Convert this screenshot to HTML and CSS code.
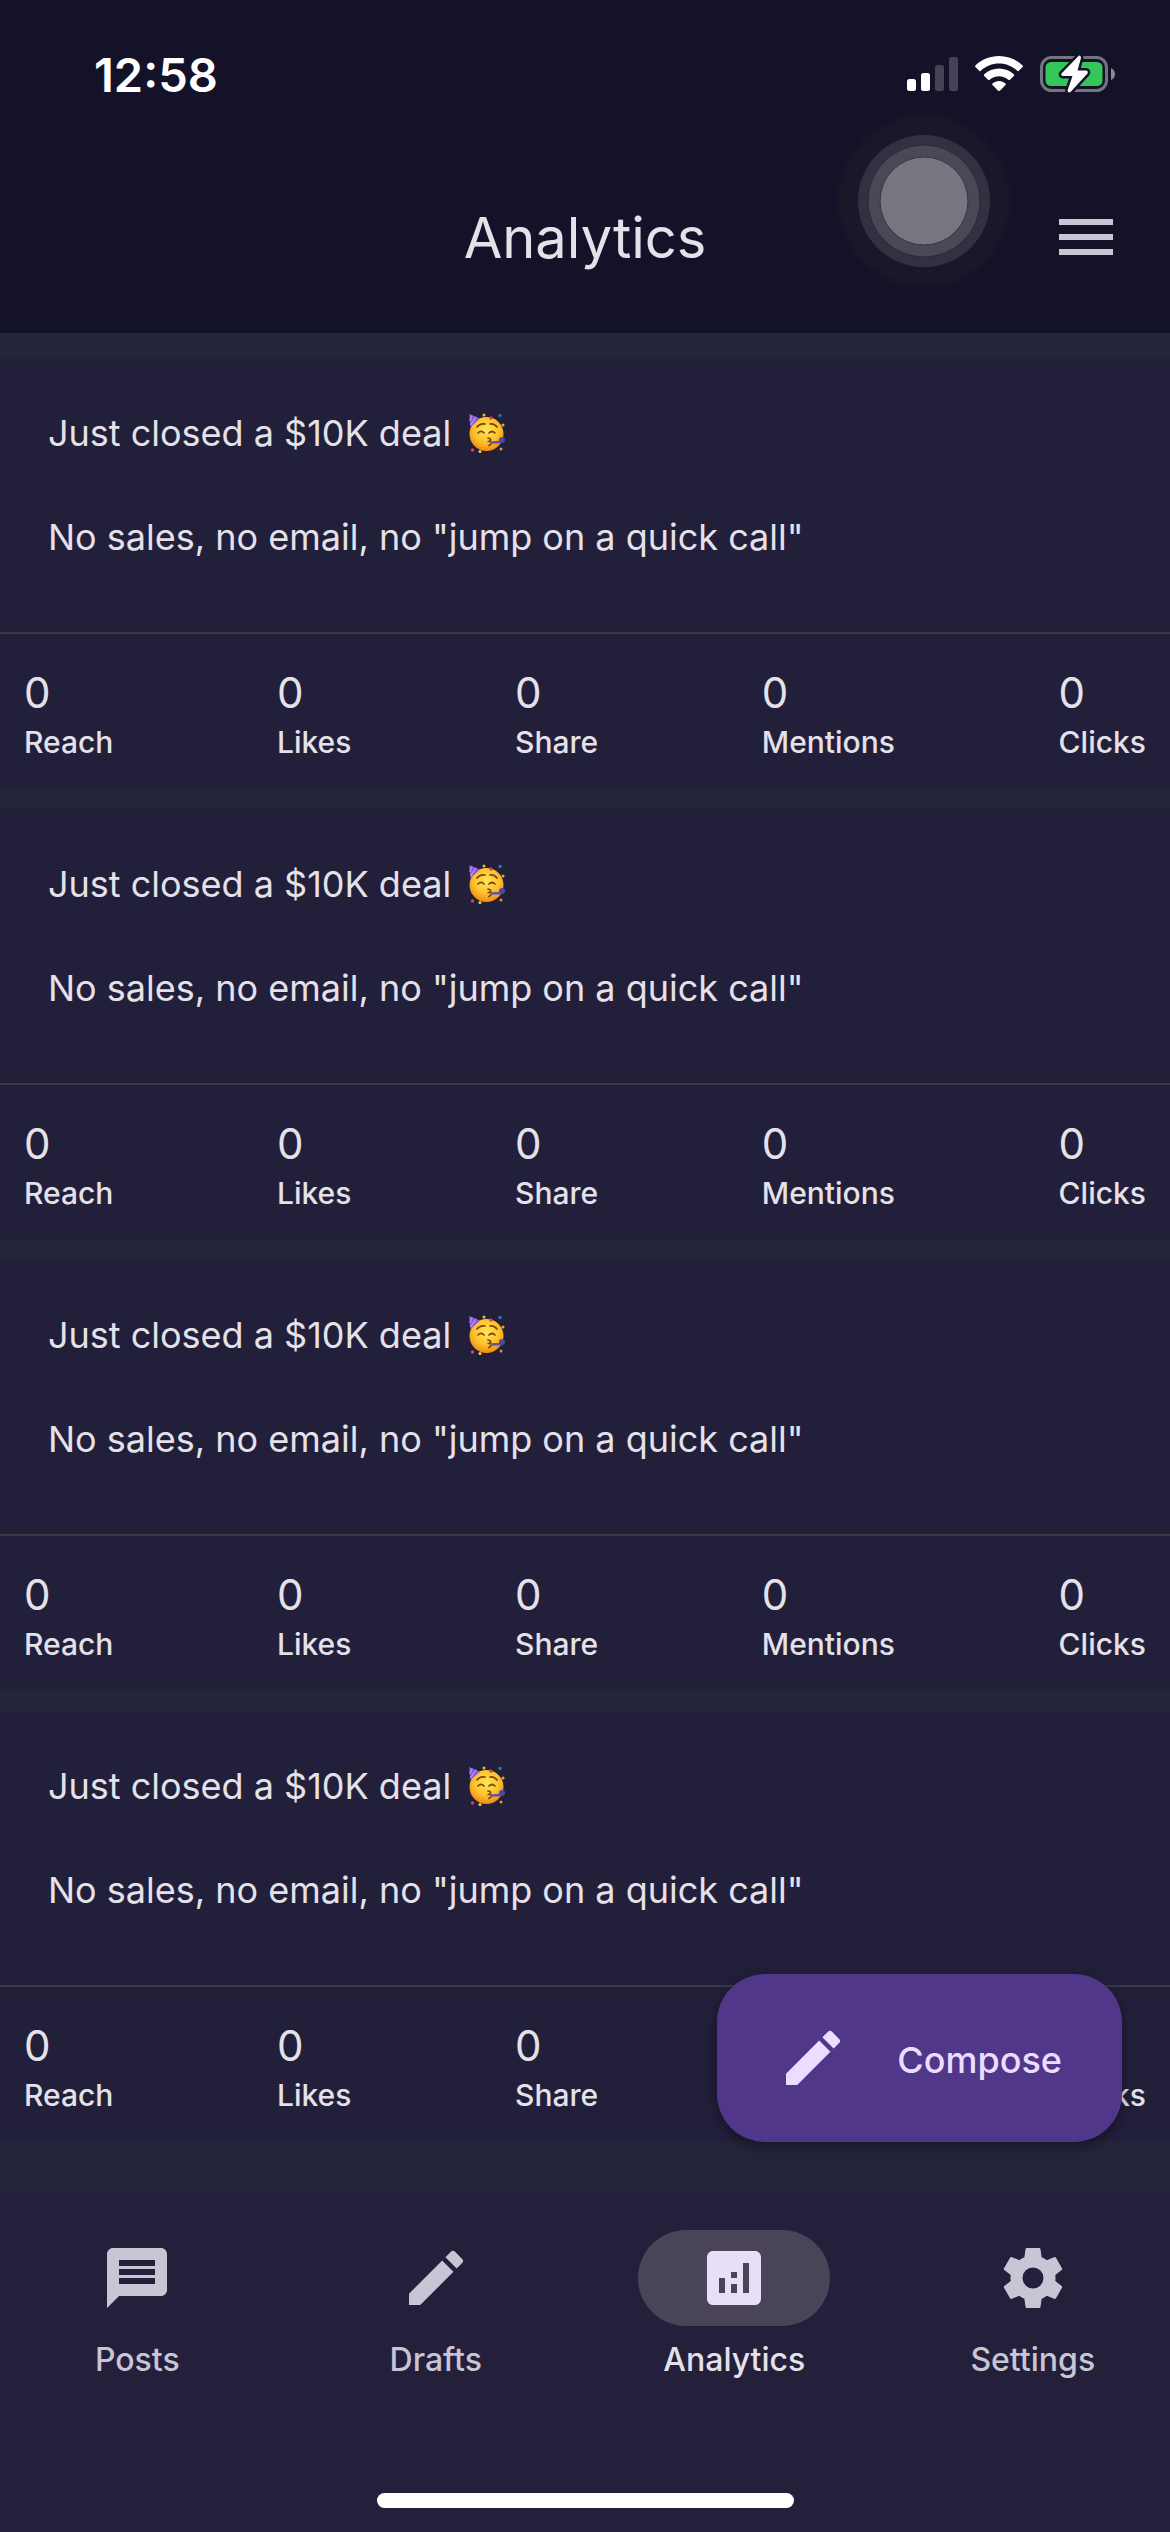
FILE: index.html
```html
<!DOCTYPE html>
<html lang="en">
<head>
<meta charset="utf-8">
<meta name="viewport" content="width=device-width, initial-scale=1">
<title>Analytics</title>
<link rel="stylesheet" href="styles.css">
</head>
<body>
<svg class="defs" aria-hidden="true">
  <defs>
    <radialGradient id="skin" cx="50%" cy="38%" r="62%">
      <stop offset="0" stop-color="#ffe55a"/><stop offset="0.6" stop-color="#fcc22c"/><stop offset="1" stop-color="#ee8a18"/>
    </radialGradient>
    <radialGradient id="halo">
      <stop offset="0.9" stop-color="#1a1728"/><stop offset="1" stop-color="#1a1728" stop-opacity="0"/>
    </radialGradient>
    <symbol id="party" viewBox="0 0 36 40">
      <circle cx="17.500" cy="21" r="17" fill="url(#skin)"/>
      <path d="M0 1 11 5.500 1.500 14Z" fill="#8658d8"/>
      <path d="M3 2.300 1 8M7 3.900 1.400 12" stroke="#b68cf0" stroke-width="1.500"/>
      <g fill="none" stroke="#7a4310" stroke-width="1.700" stroke-linecap="round">
        <path d="M8 14q3-4 8-3M21 11q4-1 7 3M9 20q3-3 6 0M20 20q3-3 6 0"/>
        <path d="M19 25q5 1 1 3.500q5 1 0 4"/>
      </g>
      <path d="M22 29.500 33 29" stroke="#5c55b8" stroke-width="2.500"/>
      <circle cx="33" cy="27" r="3" fill="#4d4a9e"/>
      <circle cx="15" cy="2" r="1.500" fill="#f2b632"/><circle cx="22" cy="5" r="1.700" fill="#e2383d"/>
      <circle cx="31" cy="2.500" r="1.800" fill="#2e6db8"/><circle cx="34" cy="12" r="1.500" fill="#f0a52c"/>
      <circle cx="3.500" cy="37" r="1.700" fill="#e2415c"/><circle cx="11" cy="38.500" r="1.500" fill="#f6d030"/>
      <circle cx="32" cy="36" r="1.500" fill="#f08a3c"/>
    </symbol>
    <symbol id="pencil" viewBox="0 0 24 24">
      <path d="M3 17.250V21h3.750L17.810 9.940l-3.750-3.750L3 17.250zM20.710 7.040a1 1 0 0 0 0-1.410l-2.340-2.340a1 1 0 0 0-1.410 0l-1.830 1.830 3.750 3.750 1.830-1.830z"/>
    </symbol>
  </defs>
</svg>

<header class="top">
  <div class="status">
    <time class="clock">12:58</time>
    <div class="indicators">
      <svg class="signal" viewBox="0 0 51 36" aria-label="Signal">
        <rect x="0" y="23" width="9" height="12" rx="2.500" fill="#fff"/><rect x="14" y="17" width="9" height="18" rx="2.500" fill="#fff"/>
        <rect x="28" y="9" width="9" height="26" rx="2.500" fill="#434257"/><rect x="42" y="1" width="9" height="34" rx="2.500" fill="#434257"/>
      </svg>
      <svg class="wifi" viewBox="0 0 48 36" aria-label="Wi-Fi" fill="#fff">
        <path d="M24 0C33 0 41.500 3.500 47.600 9.400q.7.800 0 1.600L43.800 14.800q-.8.700-1.600 0C37.300 10.200 31 7.600 24 7.600S10.700 10.200 5.800 14.800q-.8.700-1.600 0L.4 11q-.7-.8 0-1.600C6.500 3.500 15 0 24 0Z"/>
        <path d="M24 12.600c5.600 0 10.800 2.100 14.800 5.700q.9.800 0 1.700L35 23.700q-.8.700-1.700 0C30.800 21.500 27.500 20.200 24 20.200s-6.800 1.300-9.300 3.500q-.9.700-1.700 0L9.200 20q-.9-.9 0-1.700C13.200 14.700 18.400 12.600 24 12.600Z"/>
        <path d="M24 25c2.400 0 4.700.9 6.500 2.400q.9.800 0 1.700L24.900 34.700q-.9.800-1.800 0L17.500 29.100q-.9-.9 0-1.700C19.300 25.900 21.600 25 24 25Z"/>
      </svg>
      <svg class="battery" viewBox="0 0 76 40" aria-label="Battery charging">
        <rect x="1.500" y="3.500" width="65" height="33" rx="10" fill="none" stroke="#75747f" stroke-width="3"/>
        <rect x="5.500" y="8" width="57" height="24" rx="5.500" fill="#33c759"/>
        <path d="M71 14q4 2 4 6t-4 6Z" fill="#8b8a93"/>
        <path d="M38.500 2 21.500 19.500Q20.500 21.500 23 22H32.500L27.500 36.500Q28.500 40 31 37.500L47.500 19.500Q48.500 16.800 46 16.500H37.500L41 4Q40.500.5 38.500 2Z" fill="#fff" stroke="#131228" stroke-width="5" stroke-linejoin="round" paint-order="stroke"/>
      </svg>
    </div>
  </div>
  <div class="appbar">
    <h1 class="title">Analytics</h1>
    <button class="menu" type="button" aria-label="Menu">
      <svg viewBox="0 0 24 24" fill="currentColor"><path d="M3 18h18v-2H3v2zm0-5h18v-2H3v2zm0-7v2h18V6H3z"/></svg>
    </button>
  </div>
  <svg class="assist" viewBox="0 0 180 180" aria-hidden="true">
    <circle cx="90" cy="90" r="90" fill="url(#halo)"/>
    <circle cx="90" cy="90" r="66" fill="#323142"/>
    <circle cx="90" cy="90" r="56" fill="#494856" stroke="#2a293a"/>
    <circle cx="90" cy="90" r="44" fill="#767580" stroke="#36353f"/>
  </svg>
</header>

<main class="feed">
  <article class="card">
    <div class="post"><p>Just closed a $10K deal <svg class="emoji" role="img" aria-label="🥳"><use href="#party"/></svg></p><p>No sales, no email, no "jump on a quick call"</p></div>
    <dl class="stats">
      <div><dt>Reach</dt><dd>0</dd></div><div><dt>Likes</dt><dd>0</dd></div><div><dt>Share</dt><dd>0</dd></div><div><dt>Mentions</dt><dd>0</dd></div><div><dt>Clicks</dt><dd>0</dd></div>
    </dl>
  </article>
  <article class="card">
    <div class="post"><p>Just closed a $10K deal <svg class="emoji" role="img" aria-label="🥳"><use href="#party"/></svg></p><p>No sales, no email, no "jump on a quick call"</p></div>
    <dl class="stats">
      <div><dt>Reach</dt><dd>0</dd></div><div><dt>Likes</dt><dd>0</dd></div><div><dt>Share</dt><dd>0</dd></div><div><dt>Mentions</dt><dd>0</dd></div><div><dt>Clicks</dt><dd>0</dd></div>
    </dl>
  </article>
  <article class="card">
    <div class="post"><p>Just closed a $10K deal <svg class="emoji" role="img" aria-label="🥳"><use href="#party"/></svg></p><p>No sales, no email, no "jump on a quick call"</p></div>
    <dl class="stats">
      <div><dt>Reach</dt><dd>0</dd></div><div><dt>Likes</dt><dd>0</dd></div><div><dt>Share</dt><dd>0</dd></div><div><dt>Mentions</dt><dd>0</dd></div><div><dt>Clicks</dt><dd>0</dd></div>
    </dl>
  </article>
  <article class="card">
    <div class="post"><p>Just closed a $10K deal <svg class="emoji" role="img" aria-label="🥳"><use href="#party"/></svg></p><p>No sales, no email, no "jump on a quick call"</p></div>
    <dl class="stats">
      <div><dt>Reach</dt><dd>0</dd></div><div><dt>Likes</dt><dd>0</dd></div><div><dt>Share</dt><dd>0</dd></div><div><dt>Mentions</dt><dd>0</dd></div><div><dt>Clicks</dt><dd>0</dd></div>
    </dl>
  </article>
</main>

<button class="compose" type="button">
  <svg viewBox="0 0 24 24" fill="currentColor" aria-hidden="true"><use href="#pencil"/></svg>
  <span>Compose</span>
</button>

<footer class="bottom">
  <nav class="tabs" aria-label="Main">
    <a class="tab" href="#posts">
      <span class="pill"><svg viewBox="0 0 24 24" fill="currentColor"><path d="M20 2H4c-1.100 0-1.990.9-1.990 2L2 22l4-4h14c1.100 0 2-.9 2-2V4c0-1.100-.9-2-2-2zm-2 12H6v-2h12v2zm0-3H6V9h12v2zm0-3H6V6h12v2z"/></svg></span>
      <span>Posts</span>
    </a>
    <a class="tab" href="#drafts">
      <span class="pill"><svg viewBox="0 0 24 24" fill="currentColor"><use href="#pencil"/></svg></span>
      <span>Drafts</span>
    </a>
    <a class="tab tab-active" href="#analytics" aria-current="page">
      <span class="pill"><svg viewBox="0 0 24 24" fill="currentColor"><path d="M19 3H5c-1.100 0-2 .9-2 2v14c0 1.100.9 2 2 2h14c1.100 0 2-.9 2-2V5c0-1.100-.9-2-2-2zM9 17H7v-5h2v5zm4 0h-2v-3h2v3zm0-5h-2v-2h2v2zm4 5h-2V7h2v10z"/></svg></span>
      <span>Analytics</span>
    </a>
    <a class="tab" href="#settings">
      <span class="pill"><svg viewBox="0 0 24 24" fill="currentColor"><path d="M19.500 12c0-.34-.03-.66-.07-1l2.110-1.630c.19-.15.24-.42.12-.64l-2-3.460c-.12-.22-.39-.31-.61-.22l-2.490 1c-.52-.39-1.060-.73-1.690-.98l-.37-2.650A.506.506 0 0 0 14 2h-4c-.25 0-.46.180-.5.420l-.37 2.650c-.63.250-1.170.590-1.690.980l-2.490-1c-.22-.09-.49 0-.61.220l-2 3.460c-.13.220-.07.490.12.640L4.570 11c-.04.340-.07.670-.07 1s.03.650.07.970l-2.110 1.660c-.19.150-.25.420-.12.640l2 3.460c.12.220.39.300.61.220l2.490-1.010c.52.400 1.060.740 1.690.990l.37 2.650c.04.240.25.420.5.420h4c.25 0 .46-.18.5-.42l.37-2.650c.63-.26 1.170-.59 1.690-.99l2.490 1.010c.22.080.49 0 .61-.22l2-3.460c.12-.22.07-.49-.12-.64l-2.110-1.660c.04-.32.07-.63.07-.97zM12 15.500a3.500 3.500 0 1 1 0-7 3.500 3.500 0 0 1 0 7z"/></svg></span>
      <span>Settings</span>
    </a>
  </nav>
  <div class="home"></div>
</footer>
</body>
</html>
```
FILE: styles.css
```css
* { box-sizing: border-box; }

body {
  margin: 0;
  min-height: 100vh;
  display: flex;
  flex-direction: column;
  position: relative;
  background: #24243b;
  color: #e5e1e9;
  font-family: Inter, "Liberation Sans", sans-serif;
}

svg { display: block; }
.defs { position: absolute; width: 0; height: 0; }
h1, p, dl, dd { margin: 0; }
button { border: 0; font: inherit; }

.top {
  position: relative;
  background: #131228;
  padding-bottom: 60px;
}

.status {
  display: flex;
  justify-content: space-between;
  align-items: center;
  height: 141px;
  padding: 7px 54px 0 94px;
}
.clock { color: #fff; font-size: 47px; font-weight: 600; }
.indicators { display: flex; align-items: center; gap: 17px; }
.signal { width: 51px; height: 36px; }
.wifi { width: 48px; height: 36px; }
.battery { width: 76px; height: 40px; }

.appbar {
  display: grid;
  grid-template-columns: 1fr auto 1fr;
  align-items: center;
  height: 132px;
  padding: 60px 48px 0;
}
.title { grid-column: 2; padding-top: 2px; font-size: 56px; font-weight: 400; line-height: 70px; }
.menu { justify-self: end; padding: 0; background: none; color: #c9c5d4; }
.menu svg { width: 72px; height: 72px; }

.assist {
  position: absolute;
  top: 111px;
  right: 156px;
  width: 180px;
  height: 180px;
}

.feed {
  flex: 1;
  display: flex;
  flex-direction: column;
  gap: 21px;
  padding: 25px 0 52px;
}
.card { background: #221f3a; }
.post {
  display: grid;
  gap: 52px;
  padding: 49px 48px 69px;
  font-size: 36px;
  line-height: 52px;
}
.emoji { display: inline-block; width: 36px; height: 40px; margin-left: 8px; vertical-align: -7px; }

.stats {
  display: flex;
  justify-content: space-between;
  padding: 29px 24px 25px;
  border-top: 2px solid #3b3946;
}
.stats div { display: flex; flex-direction: column-reverse; }
.stats dd { font-size: 42px; line-height: 60px; }
.stats dt { font-size: 30px; font-weight: 500; line-height: 38px; padding-bottom: 2px; }

.compose {
  position: absolute;
  right: 48px;
  bottom: 390px;
  display: flex;
  align-items: center;
  gap: 48px;
  height: 168px;
  padding: 0 60px;
  border-radius: 48px;
  background: #50378a;
  color: #eaddff;
  font-size: 36px;
  font-weight: 500;
  box-shadow: 0 4px 14px rgba(0, 0, 0, 0.4);
}
.compose svg { width: 72px; height: 72px; }
.compose span { padding-top: 4px; }

.bottom {
  background: #24203b;
  padding: 37px 0 24px;
}
.tabs {
  display: grid;
  grid-template-columns: repeat(4, 1fr);
  gap: 24px;
}
.tab {
  display: flex;
  flex-direction: column;
  align-items: center;
  gap: 10px;
  color: #c9c5d4;
  font-size: 32px;
  font-weight: 500;
  line-height: 48px;
  text-decoration: none;
}
.pill {
  display: grid;
  place-items: center;
  width: 192px;
  height: 96px;
  border-radius: 48px;
}
.pill svg { width: 72px; height: 72px; }
.tab-active { color: #e5e1e9; }
.tab-active .pill { background: #4a4458; color: #e8def8; }

.home {
  width: 417px;
  height: 15px;
  margin: 109px auto 0;
  border-radius: 8px;
  background: #fff;
}
```
